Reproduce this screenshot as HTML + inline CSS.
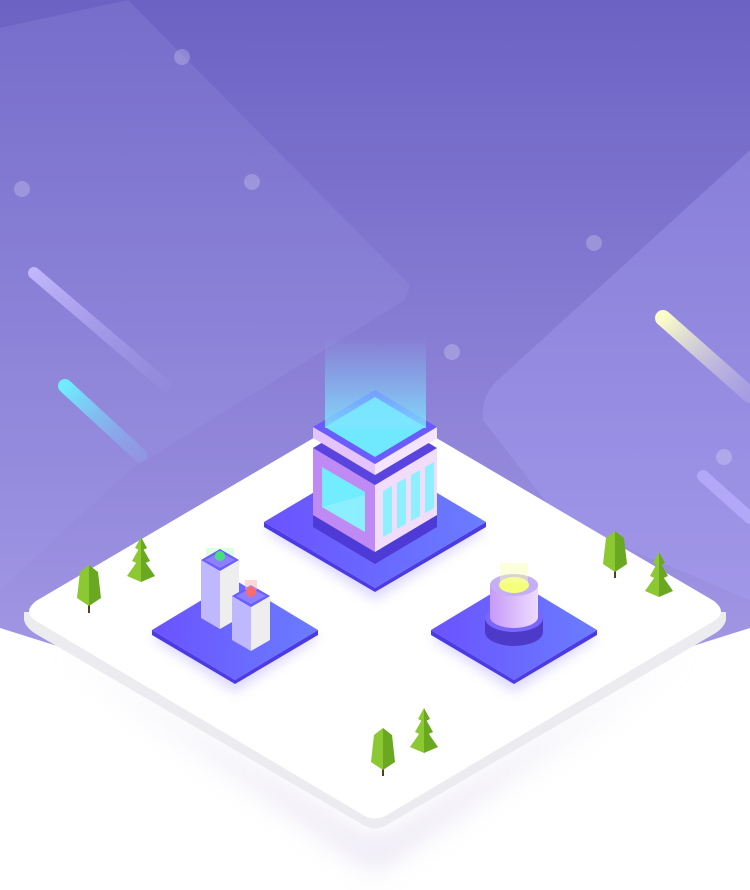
<!DOCTYPE html>
<html><head><meta charset="utf-8"><style>html,body{margin:0;padding:0;background:#fff}svg{display:block}</style></head>
<body>
<svg width="750" height="890" viewBox="0 0 750 890" xmlns="http://www.w3.org/2000/svg">
<defs>
<linearGradient id="bg" x1="0" y1="0" x2="0" y2="1"><stop offset="0" stop-color="#6c62c3"/><stop offset="1" stop-color="#a59ae6"/></linearGradient>
<linearGradient id="plate" x1="0" y1="0" x2="1" y2="0"><stop offset="0" stop-color="#6b52ff"/><stop offset="1" stop-color="#6a7dff"/></linearGradient>
<linearGradient id="beam" x1="0" y1="0" x2="0" y2="1"><stop offset="0" stop-color="#7fd8ff" stop-opacity="0"/><stop offset="1" stop-color="#7ee6ff" stop-opacity="0.85"/></linearGradient>
<linearGradient id="cyanS" x1="0" y1="0" x2="1" y2="1"><stop offset="0" stop-color="#70ecff"/><stop offset="1" stop-color="#8ab0f0" stop-opacity="0.3"/></linearGradient>
<linearGradient id="yelS" x1="0" y1="0" x2="1" y2="1"><stop offset="0" stop-color="#fbfdc8"/><stop offset="1" stop-color="#c8c0e8" stop-opacity="0.3"/></linearGradient>
<linearGradient id="whS" x1="0" y1="0" x2="1" y2="1"><stop offset="0" stop-color="#c6bcff" stop-opacity="0.9"/><stop offset="1" stop-color="#b0a6f0" stop-opacity="0.1"/></linearGradient>
<linearGradient id="cyl" x1="0" y1="0" x2="1" y2="0"><stop offset="0" stop-color="#c79af8"/><stop offset="1" stop-color="#eedcff"/></linearGradient>
<filter id="blur" x="-20%" y="-20%" width="140%" height="140%"><feGaussianBlur stdDeviation="14"/></filter>
<filter id="blur2" x="-30%" y="-30%" width="160%" height="160%"><feGaussianBlur stdDeviation="6"/></filter>
</defs>
<rect width="750" height="890" fill="#fff"/>
<polygon points="0,0 750,0 750,628 680,650 375,700 70,650 0,628" fill="url(#bg)"/>
<polygon points="0,28 0,590 130,470 405,300 410,285 128,0" fill="#a8a0f0" opacity="0.18"/>
<path d="M483,420 Q480,395 500,378 L750,150 L750,600 L560,520 Z" fill="#aaa0f5" opacity="0.35"/>
<g fill="#ffffff" opacity="0.22">
<circle cx="182" cy="57" r="8"/><circle cx="22" cy="189" r="8"/><circle cx="252" cy="182" r="8"/>
<circle cx="594" cy="243" r="8"/><circle cx="452" cy="352" r="8"/><circle cx="724" cy="457" r="8"/>
</g>
<line x1="34" y1="273" x2="165" y2="385" stroke="url(#whS)" stroke-width="12" stroke-linecap="round"/>
<line x1="65" y1="386" x2="140" y2="455" stroke="url(#cyanS)" stroke-width="14" stroke-linecap="round"/>
<line x1="663" y1="318" x2="750" y2="395" stroke="url(#yelS)" stroke-width="16" stroke-linecap="round"/>
<line x1="703" y1="476" x2="750" y2="518" stroke="#bcb2ff" stroke-opacity="0.7" stroke-width="12" stroke-linecap="round"/>
<!-- board shadow -->
<path d="M60,650 L375,845 L690,650 L375,870 Z" fill="#d8d0e8" opacity="0.6" filter="url(#blur)"/>
<!-- board thickness -->
<path d="M24,612 L24,620 Q26,628 36,634 L365,826 Q375,831 385,826 L714,634 Q724,628 726,620 L726,612 Z" fill="#ececf0"/>
<!-- board -->
<path d="M363,409 Q375,402 387,409 L714,601 Q728,612 714,621 L387,815 Q375,822 363,815 L36,621 Q22,612 36,601 Z" fill="#ffffff"/>
<polygon points="264,530 375,466 486,530 375,600" fill="#9a8cff" opacity="0.35" filter="url(#blur2)"/>
<polygon points="152,638 235,590 318,638 235,692" fill="#9a8cff" opacity="0.35" filter="url(#blur2)"/>
<polygon points="431,638 514,590 597,638 514,692" fill="#9a8cff" opacity="0.35" filter="url(#blur2)"/>
<polygon points="264,522 375,588 486,522 486,527 375,592 264,527" fill="#4b3be0"/>
<polygon points="264,522 375,456 486,522 375,588" fill="url(#plate)"/>
<polygon points="152,630 235,680 318,630 318,635 235,684 152,635" fill="#4b3be0"/>
<polygon points="152,630 235,580 318,630 235,680" fill="url(#plate)"/>
<polygon points="431,630 514,680 597,630 597,635 514,684 431,635" fill="#4b3be0"/>
<polygon points="431,630 514,580 597,630 514,680" fill="url(#plate)"/>
<!-- central building -->
<polygon points="313,515 375,552 437,515 437,527 375,564 313,527" fill="#4e3ad6"/>
<polygon points="313,448 375,485 375,552 313,515" fill="#c08af5"/>
<polygon points="375,485 437,448 437,515 375,552" fill="#f1dcfa"/>
<polygon points="322,467 365,492 365,532 322,507" fill="#72ecff"/>
<polygon points="322,507 365,495 365,532" fill="#9ef2ff" opacity="0.6"/>
<g fill="#8ef0ff">
<polygon points="383,491 392,486 392,532 383,537"/>
<polygon points="397,483 406,478 406,524 397,529"/>
<polygon points="411,475 420,470 420,516 411,521"/>
<polygon points="425,467 434,462 434,508 425,513"/>
</g>
<polygon points="313,448 375,411 437,448 375,485" fill="#5a44e0"/>
<polygon points="313,427 375,464 437,427 437,438 375,475 313,438" fill="#e4c4fb"/>
<polygon points="375,464 437,427 437,438 375,475" fill="#f4e4ff"/>
<polygon points="313,427 375,390 437,427 375,464" fill="#6a5cff"/>
<polygon points="325,427 375,397 425,427 375,457" fill="#70e8fd"/>
<rect x="325" y="338" width="101" height="90" fill="url(#beam)"/>
<!-- left towers -->
<rect x="206" y="548" width="28" height="14" fill="#b0ffb8" opacity="0.4"/>
<polygon points="201,560 220,571 220,629 201,618" fill="#c0b8ff"/>
<polygon points="220,571 239,560 239,618 220,629" fill="#eeeeee"/>
<polygon points="201,560 220,549 239,560 220,571" fill="#6a5cff"/>
<polygon points="205,560 220,552 235,560 220,568" fill="#8d80ff"/>
<circle cx="220" cy="556" r="5" fill="#46e07a"/>
<polygon points="232,596 251,607 251,651 232,640" fill="#c0b8ff"/>
<polygon points="251,607 270,596 270,640 251,651" fill="#eeeeee"/>
<polygon points="232,596 251,585 270,596 251,607" fill="#6a5cff"/>
<polygon points="236,596 251,588 266,596 251,604" fill="#8d80ff"/>
<rect x="245" y="580" width="12" height="10" fill="#ffb0b0" opacity="0.5"/>
<circle cx="251" cy="592" r="5" fill="#ff6a6a"/>
<!-- cylinder -->
<ellipse cx="514" cy="632" rx="29" ry="14" fill="#4e3ac8"/>
<rect x="485" y="618" width="58" height="14" fill="#4e3ac8"/>
<ellipse cx="514" cy="618" rx="29" ry="14" fill="#7a66ff"/>
<rect x="490" y="585" width="48" height="32" fill="url(#cyl)"/>
<ellipse cx="514" cy="617" rx="24" ry="11" fill="url(#cyl)"/>
<ellipse cx="514" cy="585" rx="24" ry="11" fill="#c4aef5"/>
<ellipse cx="514" cy="585" rx="15" ry="8" fill="#f6ff7a"/>
<rect x="500" y="563" width="28" height="20" fill="#f8ffb0" opacity="0.45"/>
<!-- trees -->
<g>
<rect x="88" y="600" width="2" height="13" fill="#5a3a2a"/>
<polygon points="89,565 80,572 77,598 89,606" fill="#8bc832"/>
<polygon points="89,565 98,572 101,598 89,606" fill="#6aa822"/>
</g>
<g>
<rect x="614" y="566" width="2" height="12" fill="#5a3a2a"/>
<polygon points="615,531 606,538 603,564 615,572" fill="#8bc832"/>
<polygon points="615,531 624,538 627,564 615,572" fill="#6aa822"/>
</g>
<g>
<rect x="382" y="764" width="2" height="12" fill="#5a3a2a"/>
<polygon points="383,728 374,735 371,762 383,770" fill="#8bc832"/>
<polygon points="383,728 392,735 395,762 383,770" fill="#6aa822"/>
</g>
<g>
<polygon points="141,537 135,548 141,551" fill="#8bc832"/><polygon points="141,537 147,548 141,551" fill="#6aa822"/>
<polygon points="141,545 132,561 141,565" fill="#8bc832"/><polygon points="141,545 150,561 141,565" fill="#6aa822"/>
<polygon points="141,556 127,576 141,582" fill="#8bc832"/><polygon points="141,556 155,576 141,582" fill="#6aa822"/>
</g>
<g>
<polygon points="659,552 653,563 659,566" fill="#8bc832"/><polygon points="659,552 665,563 659,566" fill="#6aa822"/>
<polygon points="659,560 650,576 659,580" fill="#8bc832"/><polygon points="659,560 668,576 659,580" fill="#6aa822"/>
<polygon points="659,571 645,591 659,597" fill="#8bc832"/><polygon points="659,571 673,591 659,597" fill="#6aa822"/>
</g>
<g>
<polygon points="424,708 418,719 424,722" fill="#8bc832"/><polygon points="424,708 430,719 424,722" fill="#6aa822"/>
<polygon points="424,716 415,732 424,736" fill="#8bc832"/><polygon points="424,716 433,732 424,736" fill="#6aa822"/>
<polygon points="424,727 410,747 424,753" fill="#8bc832"/><polygon points="424,727 438,747 424,753" fill="#6aa822"/>
</g>
</svg>
</body></html>
